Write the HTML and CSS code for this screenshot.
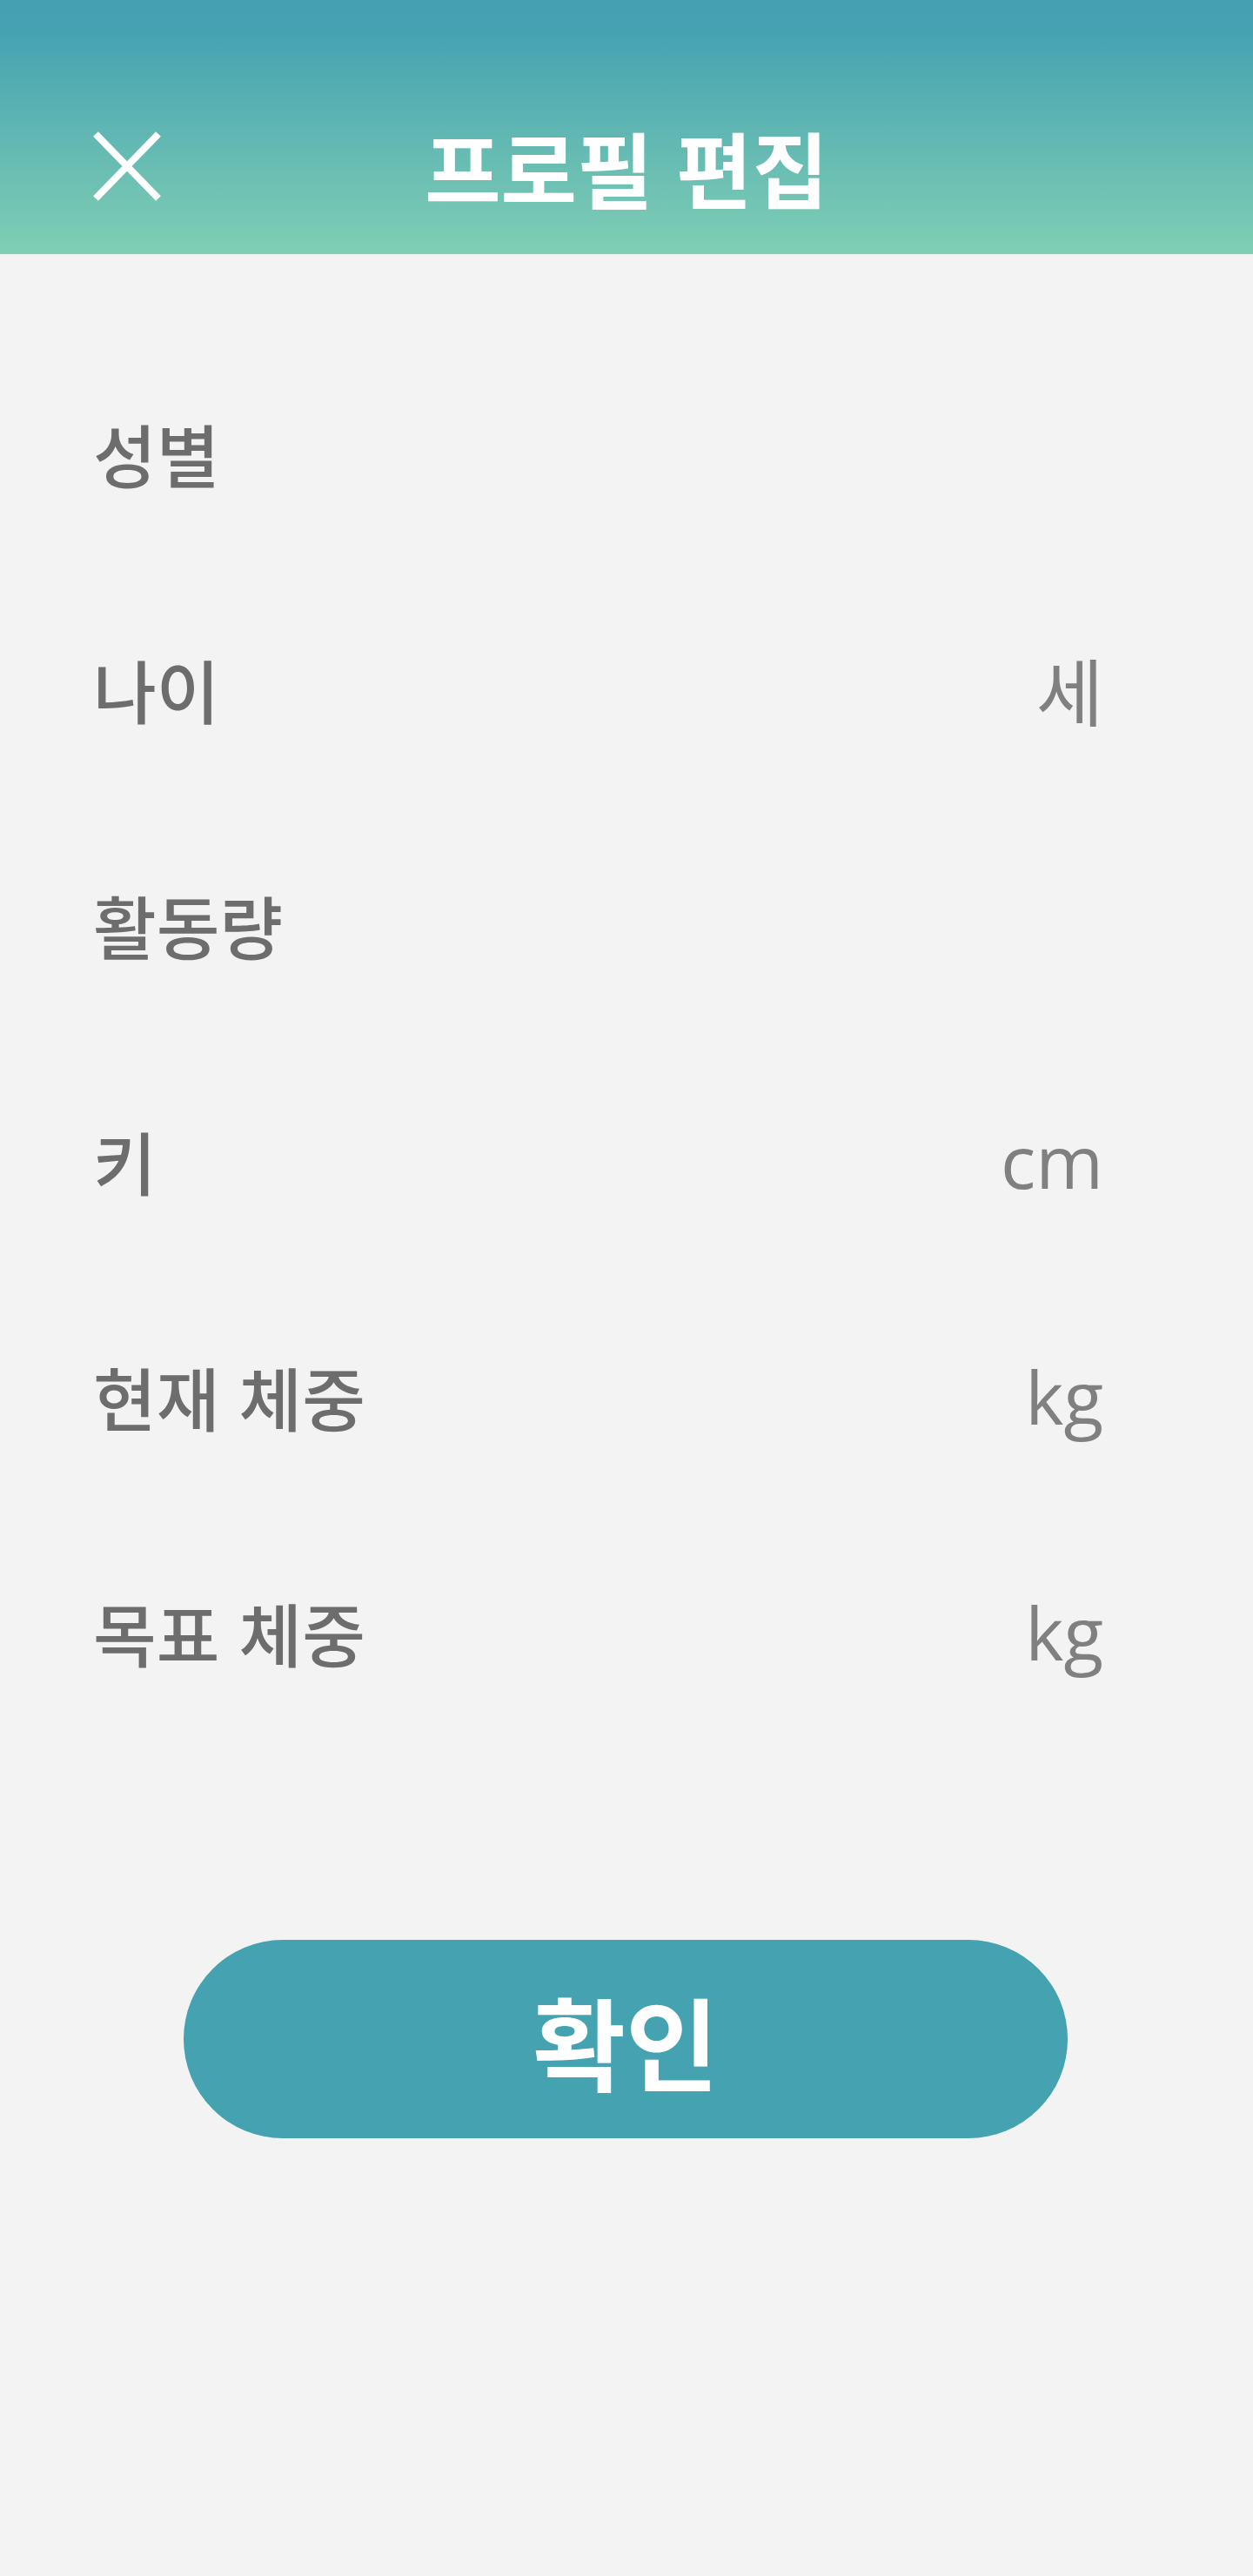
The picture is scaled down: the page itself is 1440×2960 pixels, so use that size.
FILE: index.html
```html
<!DOCTYPE html>
<html lang="ko">
<head>
<meta charset="utf-8">
<title>프로필 편집</title>
<link rel="stylesheet" href="styles.css">
</head>
<body>
<div class="screen">
  <header class="appbar">
    <div class="toolbar">
      <button class="close" aria-label="닫기">
        <svg width="78" height="80" viewBox="0 0 78 80"><path d="M3 3 L75 77 M75 3 L3 77" stroke="#fff" stroke-width="8" fill="none"/></svg>
      </button>
      <h1 class="title">프로필 편집</h1>
    </div>
  </header>
  <main class="form">
    <div class="row"><span class="label">성별</span></div>
    <div class="row"><span class="label">나이</span><span class="unit">세</span></div>
    <div class="row"><span class="label">활동량</span></div>
    <div class="row"><span class="label">키</span><span class="unit">cm</span></div>
    <div class="row"><span class="label">현재 체중</span><span class="unit">kg</span></div>
    <div class="row"><span class="label">목표 체중</span><span class="unit">kg</span></div>
  </main>
  <div class="actions">
    <button class="confirm">확인</button>
  </div>
</div>
</body>
</html>
```
FILE: styles.css
```css
html, body {
  margin: 0;
  padding: 0;
  background: #f3f3f3;
}
body {
  font-family: "Open Sans", "Noto Sans CJK KR", sans-serif;
}
.screen {
  width: 1440px;
  min-height: 2960px;
  background: #f3f3f3;
}
.appbar {
  height: 292px;
  box-sizing: border-box;
  padding-top: 90px;
  background: linear-gradient(to bottom, #45a1b1 0%, #45a2b1 12%, #80cfb4 100%);
}
.toolbar {
  position: relative;
  height: 202px;
  display: flex;
  align-items: center;
  justify-content: center;
}
.close {
  position: absolute;
  left: 107px;
  top: 61px;
  width: 78px;
  height: 80px;
  padding: 0;
  border: 0;
  background: none;
  display: block;
}
.close svg { display: block; }
.title {
  margin: 0;
  font-family: "Noto Sans CJK KR", sans-serif;
  font-weight: 700;
  font-size: 95px;
  line-height: 1;
  color: #fff;
}
.form {
  padding: 93px 172px 0 107px;
}
.row {
  height: 271px;
  display: flex;
  align-items: center;
  justify-content: space-between;
}
.label {
  font-family: "Noto Sans CJK KR", sans-serif;
  font-weight: 500;
  font-size: 79px;
  color: #6d6d6d;
}
.unit {
  font-family: "Open Sans", "Noto Sans CJK KR", sans-serif;
  font-weight: 400;
  font-size: 84px;
  color: #808080;
}
.actions {
  display: flex;
  justify-content: center;
  padding-top: 218px;
}
.confirm {
  width: 1016px;
  height: 228px;
  border: 0;
  border-radius: 114px;
  background: #45a2b1;
  color: #fff;
  font-family: "Noto Sans CJK KR", sans-serif;
  font-weight: 700;
  font-size: 116px;
  line-height: 1;
  padding: 0;
  margin-left: -2px;
}
```
